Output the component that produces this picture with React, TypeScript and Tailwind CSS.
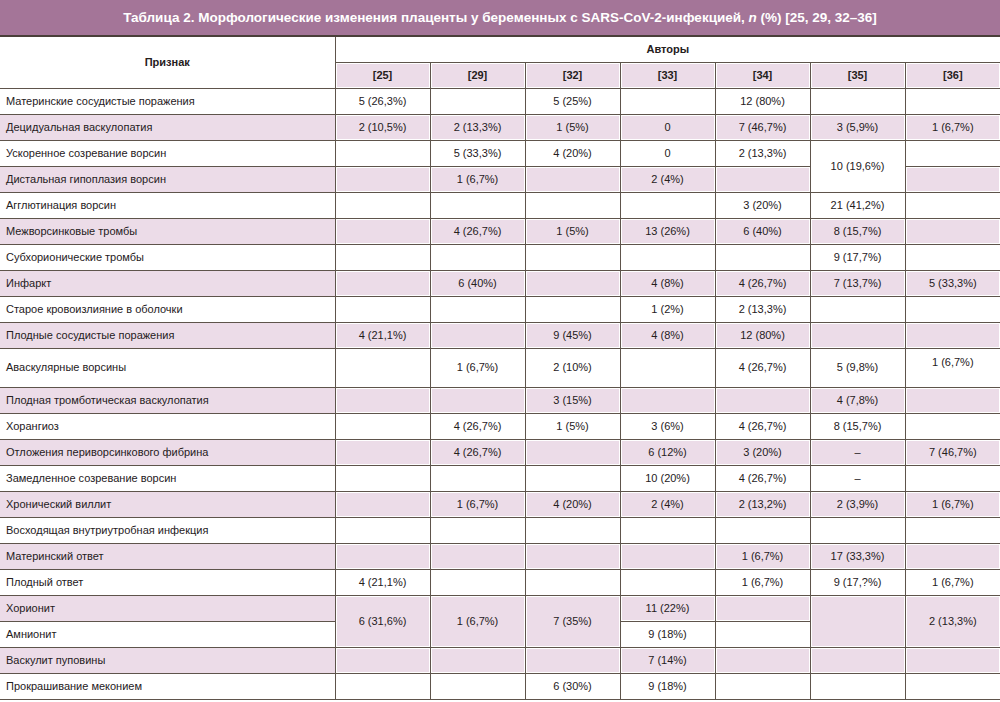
import React from "react";

type Cell = { t?: string; rs?: number; w?: boolean; top?: boolean } | null;

const rows: { label: string; h?: number; cells: (string | Cell)[] }[] = [
  { label: "Материнские сосудистые поражения", cells: ["5 (26,3%)", "", "5 (25%)", "", "12 (80%)", "", ""] },
  { label: "Децидуальная васкулопатия", cells: ["2 (10,5%)", "2 (13,3%)", "1 (5%)", "0", "7 (46,7%)", "3 (5,9%)", "1 (6,7%)"] },
  { label: "Ускоренное созревание ворсин", cells: ["", "5 (33,3%)", "4 (20%)", "0", "2 (13,3%)", { t: "10 (19,6%)", rs: 2, w: true }, ""] },
  { label: "Дистальная гипоплазия ворсин", cells: ["", "1 (6,7%)", "", "2 (4%)", "", null, ""] },
  { label: "Агглютинация ворсин", cells: ["", "", "", "", "3 (20%)", "21 (41,2%)", ""] },
  { label: "Межворсинковые тромбы", cells: ["", "4 (26,7%)", "1 (5%)", "13 (26%)", "6 (40%)", "8 (15,7%)", ""] },
  { label: "Субхорионические тромбы", cells: ["", "", "", "", "", "9 (17,7%)", ""] },
  { label: "Инфаркт", cells: ["", "6 (40%)", "", "4 (8%)", "4 (26,7%)", "7 (13,7%)", "5 (33,3%)"] },
  { label: "Старое кровоизлияние в оболочки", cells: ["", "", "", "1 (2%)", "2 (13,3%)", "", ""] },
  { label: "Плодные сосудистые поражения", cells: ["4 (21,1%)", "", "9 (45%)", "4 (8%)", "12 (80%)", "", ""] },
  { label: "Аваскулярные ворсины", h: 39, cells: ["", "1 (6,7%)", "2 (10%)", "", "4 (26,7%)", "5 (9,8%)", { t: "1 (6,7%)", top: true }] },
  { label: "Плодная тромботическая васкулопатия", cells: ["", "", "3 (15%)", "", "", "4 (7,8%)", ""] },
  { label: "Хорангиоз", cells: ["", "4 (26,7%)", "1 (5%)", "3 (6%)", "4 (26,7%)", "8 (15,7%)", ""] },
  { label: "Отложения периворсинкового фибрина", cells: ["", "4 (26,7%)", "", "6 (12%)", "3 (20%)", "–", "7 (46,7%)"] },
  { label: "Замедленное созревание ворсин", cells: ["", "", "", "10 (20%)", "4 (26,7%)", "–", ""] },
  { label: "Хронический виллит", cells: ["", "1 (6,7%)", "4 (20%)", "2 (4%)", "2 (13,2%)", "2 (3,9%)", "1 (6,7%)"] },
  { label: "Восходящая внутриутробная инфекция", cells: ["", "", "", "", "", "", ""] },
  { label: "Материнский ответ", cells: ["", "", "", "", "1 (6,7%)", "17 (33,3%)", ""] },
  { label: "Плодный ответ", cells: ["4 (21,1%)", "", "", "", "1 (6,7%)", "9 (17,?%)", "1 (6,7%)"] },
  {
    label: "Хорионит",
    cells: [
      { t: "6 (31,6%)", rs: 2 },
      { t: "1 (6,7%)", rs: 2 },
      { t: "7 (35%)", rs: 2 },
      "11 (22%)",
      "",
      { t: "", rs: 2 },
      { t: "2 (13,3%)", rs: 2 },
    ],
  },
  { label: "Амнионит", cells: [null, null, null, "9 (18%)", "", null, null] },
  { label: "Васкулит пуповины", cells: ["", "", "", "7 (14%)", "", "", ""] },
  { label: "Прокрашивание меконием", cells: ["", "", "6 (30%)", "9 (18%)", "", "", ""] },
];

const heads = ["[25]", "[29]", "[32]", "[33]", "[34]", "[35]", "[36]"];

const B = "border border-[#5e544b]";
const PINK = "bg-[#ecdce8] shadow-[inset_0_0_0_1px_#ffffff]";

export default function App() {
  return (
    <div
      className="w-[1000px] h-[702px] bg-white text-[#25201c] overflow-hidden"
      style={{ fontFamily: '"Liberation Sans", Arial, sans-serif' }}
    >
      <div className="h-[35px] bg-[#a47598] flex items-center justify-center text-white font-bold text-[13.5px] leading-none">
        <span>
          Таблица 2. Морфологические изменения плаценты у беременных с SARS-CoV-2-инфекцией, <i>n</i> (%) [25, 29, 32–36]
        </span>
      </div>
      <div className="h-[2px] bg-[#4a3f3a]" />
      <table className="w-[1000px] table-fixed border-collapse text-[11px] leading-none">
        <colgroup>
          <col className="w-[335px]" />
          {heads.map((h) => (
            <col key={h} className="w-[95px]" />
          ))}
        </colgroup>
        <thead>
          <tr className="h-[25px]">
            <th rowSpan={2} className={`${B} border-l-0 border-t-0 font-bold text-center bg-white`}>
              Признак
            </th>
            <th colSpan={7} className={`${B} border-r-0 border-t-0 font-bold text-center bg-white`}>
              Авторы
            </th>
          </tr>
          <tr className="h-[26px]">
            {heads.map((h, i) => (
              <th key={h} className={`${B} ${i === 6 ? "border-r-0" : ""} ${PINK} font-bold text-center`}>
                {h}
              </th>
            ))}
          </tr>
        </thead>
        <tbody>
          {rows.map((r, ri) => {
            const pink = ri % 2 === 1;
            return (
              <tr key={r.label} style={{ height: r.h ?? 26 }}>
                <td className={`${B} border-l-0 text-left pl-[6px] ${pink ? "bg-[#ecdce8]" : "bg-white"}`}>
                  {r.label}
                </td>
                {r.cells.map((c, ci) => {
                  if (c === null) return null;
                  const cell: Cell = typeof c === "string" ? { t: c } : c;
                  const bg = cell!.w ? "bg-white" : pink ? PINK : "bg-white";
                  return (
                    <td
                      key={ci}
                      rowSpan={cell!.rs}
                      className={`${B} ${ci === 6 ? "border-r-0" : ""} ${bg} text-center ${
                        cell!.top ? "align-top pt-[8px]" : ""
                      }`}
                    >
                      {cell!.t}
                    </td>
                  );
                })}
              </tr>
            );
          })}
        </tbody>
      </table>
    </div>
  );
}
